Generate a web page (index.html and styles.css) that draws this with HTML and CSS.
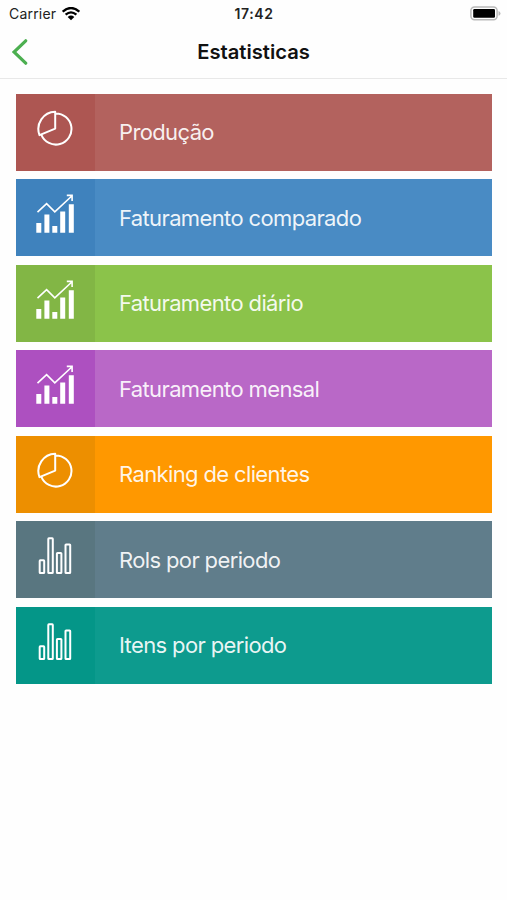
FILE: index.html
```html
<!DOCTYPE html>
<html lang="pt-BR">
<head>
    <meta charset="UTF-8">
    <meta name="viewport" content="width=device-width, initial-scale=1.0">
    <title>Estatisticas</title>
    <link rel="stylesheet" href="styles.css">
</head>
<body>
    <svg class="symbols">
        <symbol id="icon-pie" viewBox="0 0 40 40">
            <path d="M19.4 4.4A15.6 15.6 0 1 1 5.4 25.8M19.2 2.8A17.2 17.2 0 0 0 3.5 26.1L19.2 19.6Z" fill="none" stroke="currentColor" stroke-width="2" stroke-linejoin="round"/>
        </symbol>
        <symbol id="icon-growth" viewBox="0 0 40 40">
            <path d="M.3 29h5v9.7h-5zM8.4 20.4h5v18.3h-5zM16.3 32h5v6.7h-5zM24.2 17.6h5v21.1h-5zM32.8 10.2h5v28.5h-5z" fill="currentColor"/>
            <path d="M1.5 18.2L10.6 9.6L18.8 17.8L35.8 2M30.8 1.4H36.1V7" fill="none" stroke="currentColor" stroke-width="1.6"/>
        </symbol>
        <symbol id="icon-bars" viewBox="0 0 40 40">
            <g fill="none" stroke="currentColor" stroke-width="2">
                <rect x="3.7" y="24.3" width="4.5" height="12.8" rx=".6"/>
                <rect x="12.3" y="2.3" width="4.5" height="34.8" rx=".6"/>
                <rect x="20.9" y="17" width="4.5" height="20.1" rx=".6"/>
                <rect x="29.5" y="8.5" width="4.7" height="28.6" rx=".6"/>
            </g>
        </symbol>
    </svg>

    <div class="status-bar">
        <div class="carrier">
            <span>Carrier</span>
            <svg class="wifi" viewBox="0 0 18 14">
                <path d="M.7 4.7Q9-2.7 17.3 4.7M3.6 7.7Q9 3 14.4 7.7" fill="none" stroke="#000" stroke-width="2.3"/>
                <path d="M5.7 9.9Q9 7.2 12.3 9.9L9 13.2Z"/>
            </svg>
        </div>
        <div class="time">17:42</div>
        <svg class="battery" viewBox="0 0 31 15">
            <rect x=".9" y=".9" width="26.2" height="12.8" rx="3.6" fill="#fff" stroke="#b9b9b9" stroke-width="1.5"/>
            <rect x="3.2" y="3" width="21.8" height="8.8" rx="1.2"/>
            <path d="M28.5 5V9.8Q30.5 9 30.5 7.4T28.5 5Z" fill="#b9b9b9"/>
        </svg>
    </div>

    <header class="header">
        <a href="#" class="back-link" aria-label="Voltar">
            <svg viewBox="0 0 16 26"><path d="M13.7 1.8L2 13L13.7 24.2" fill="none" stroke="#4caf50" stroke-width="3.2" stroke-linecap="round"/></svg>
        </a>
        <h1>Estatisticas</h1>
    </header>

    <main class="menu">
        <a href="#" class="menu-item red">
            <span class="menu-icon"><svg><use href="#icon-pie"/></svg></span>
            <span class="menu-text">Produção</span>
        </a>
        <a href="#" class="menu-item blue">
            <span class="menu-icon"><svg><use href="#icon-growth"/></svg></span>
            <span class="menu-text">Faturamento comparado</span>
        </a>
        <a href="#" class="menu-item green">
            <span class="menu-icon"><svg><use href="#icon-growth"/></svg></span>
            <span class="menu-text">Faturamento diário</span>
        </a>
        <a href="#" class="menu-item purple">
            <span class="menu-icon"><svg><use href="#icon-growth"/></svg></span>
            <span class="menu-text">Faturamento mensal</span>
        </a>
        <a href="#" class="menu-item orange">
            <span class="menu-icon"><svg><use href="#icon-pie"/></svg></span>
            <span class="menu-text">Ranking de clientes</span>
        </a>
        <a href="#" class="menu-item gray">
            <span class="menu-icon"><svg><use href="#icon-bars"/></svg></span>
            <span class="menu-text">Rols por periodo</span>
        </a>
        <a href="#" class="menu-item teal">
            <span class="menu-icon"><svg><use href="#icon-bars"/></svg></span>
            <span class="menu-text">Itens por periodo</span>
        </a>
    </main>
</body>
</html>
```
FILE: styles.css
```css
* {
    box-sizing: border-box;
}
body {
    font-family: Inter, "Liberation Sans", sans-serif;
    margin: 0;
    min-height: 100vh;
    background-color: #fefefe;
}
.symbols {
    display: none;
}
.status-bar {
    display: grid;
    grid-template-columns: 1fr auto 1fr;
    align-items: center;
    height: 27px;
    padding: 0 6px 0 9px;
    font-size: 14px;
    color: #222;
}
.carrier {
    display: flex;
    align-items: center;
    gap: 6px;
    letter-spacing: 0.2px;
}
.wifi {
    width: 18px;
    height: 14px;
}
.time {
    padding-right: 2px;
    font-weight: 600;
    letter-spacing: 0.6px;
}
.battery {
    width: 31px;
    height: 15px;
    justify-self: end;
}
.header {
    display: grid;
    grid-template-columns: 1fr auto 1fr;
    align-items: center;
    height: 52px;
    padding: 0 12px 1px;
    border-bottom: 1px solid #e8e8e8;
}
.header h1 {
    margin: 0;
    padding-bottom: 1px;
    font-size: 20.2px;
    font-weight: 600;
    color: #111;
}
.back-link {
    display: flex;
}
.back-link svg {
    width: 16px;
    height: 26px;
}
.menu {
    display: flex;
    flex-direction: column;
    gap: 8.5px;
    padding: 14.7px 15px 0 15.5px;
}
.menu-item {
    display: flex;
    align-items: center;
    height: 77px;
    color: #fff;
    text-decoration: none;
}
.menu-icon {
    width: 79.5px;
    height: 100%;
    padding: 15px 0 0 20px;
}
.menu-icon svg {
    display: block;
    width: 40px;
    height: 40px;
}
.menu-text {
    padding-left: 24px;
    font-size: 22px;
    letter-spacing: -0.63px;
    color: rgba(255, 255, 255, 0.92);
}
.red {
    background-color: #b3625e;
}
.red .menu-icon {
    background-color: #ad5652;
}
.blue {
    background-color: #498bc4;
}
.blue .menu-icon {
    background-color: #3f82bd;
}
.green {
    background-color: #8bc34a;
}
.green .menu-icon {
    background-color: #82b645;
}
.purple {
    background-color: #b968c7;
}
.purple .menu-icon {
    background-color: #ad50c0;
}
.orange {
    background-color: #ff9800;
}
.orange .menu-icon {
    background-color: #ed8f00;
}
.gray {
    background-color: #607d8b;
}
.gray .menu-icon {
    background-color: #597680;
}
.teal {
    background-color: #0d9b8e;
}
.teal .menu-icon {
    background-color: #049688;
}
```
